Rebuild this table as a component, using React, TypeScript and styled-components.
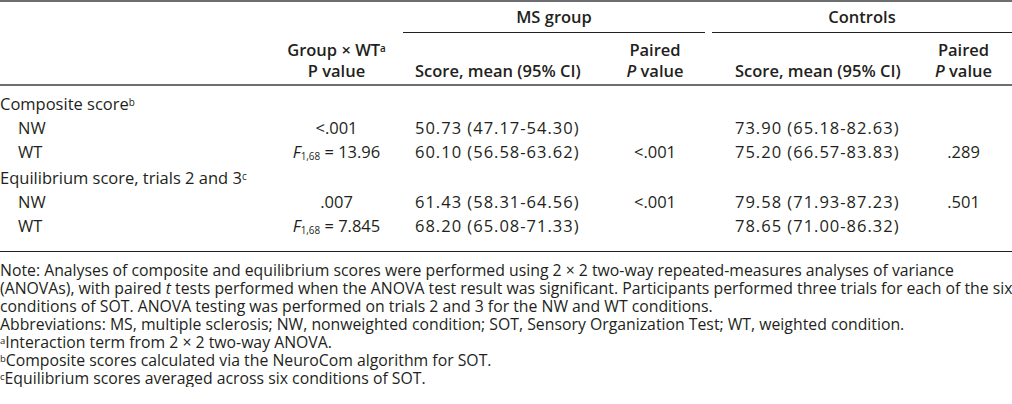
import React from 'react';
import styled, { createGlobalStyle } from 'styled-components';

const GlobalStyle = createGlobalStyle`
  body {
    margin: 0;
    background: #ffffff;
    color: #231f20;
    font-family: "Open Sans", "Liberation Sans", sans-serif;
  }
`;

type Align = 'left' | 'center';

const Wrap = styled.div`
  width: 1012px;
`;

const Rule = styled.div<{ $weight: number; $color: string }>`
  height: ${(p) => p.$weight}px;
  background: ${(p) => p.$color};
`;

const Table = styled.table`
  width: 1012px;
  table-layout: fixed;
  border-collapse: separate;
  border-spacing: 0;
  font-size: 16.5px;
  line-height: 24px;
`;

const SpanCell = styled.th`
  padding: 4px 0 0;
  line-height: 22px;
  font-weight: 600;
  text-align: center;
  vertical-align: top;
`;

const SpanRule = styled.div`
  height: 1px;
  margin-top: 4px;
  background: #231f20;
`;

const HeadCell = styled.th<{ $align: Align; $pad?: number }>`
  padding: 6px 0 3px ${(p) => p.$pad ?? 0}px;
  line-height: 21px;
  font-weight: 600;
  vertical-align: bottom;
  text-align: ${(p) => p.$align};
  white-space: nowrap;
`;

const RuleCell = styled.td`
  padding: 0;
  line-height: 0;
`;

const BodyRow = styled.tr<{ $section: boolean; $first: boolean }>`
  td {
    padding-top: ${(p) => (p.$first ? 6 : p.$section ? 2 : 0)}px;
  }
`;

const SpacerCell = styled.td`
  height: 13px;
  padding: 0;
`;

const Cell = styled.td<{ $align: Align; $pad?: number; $num?: boolean }>`
  padding: 0 0 0 ${(p) => p.$pad ?? 0}px;
  text-align: ${(p) => p.$align};
  letter-spacing: ${(p) => (p.$num ? '1px' : 'normal')};
  white-space: nowrap;
`;

const Sup = styled.sup`
  font-size: 0.6em;
  line-height: 0;
  vertical-align: 0.45em;
`;

const Sub = styled.sub`
  font-size: 0.6em;
  line-height: 0;
  vertical-align: -0.25em;
`;

const Notes = styled.div`
  padding-top: 9px;
  font-size: 15.8px;
  line-height: 18px;
`;

const NoteLine = styled.p`
  margin: 0;
  white-space: nowrap;
`;

interface Row {
  label: React.ReactNode;
  indent?: boolean;
  section?: boolean;
  inter?: React.ReactNode;
  msScore?: string;
  msP?: string;
  ctScore?: string;
  ctP?: string;
}

const F = ({ df, value }: { df: string; value: string }) => (
  <>
    <i>F</i>
    <Sub>{df}</Sub> = {value}
  </>
);

const rows: Row[] = [
  { label: <>Composite score<Sup>b</Sup></>, section: true },
  { label: 'NW', indent: true, inter: '<.001', msScore: '50.73 (47.17-54.30)', ctScore: '73.90 (65.18-82.63)' },
  {
    label: 'WT',
    indent: true,
    inter: <F df="1,68" value="13.96" />,
    msScore: '60.10 (56.58-63.62)',
    msP: '<.001',
    ctScore: '75.20 (66.57-83.83)',
    ctP: '.289',
  },
  { label: <>Equilibrium score, trials 2 and 3<Sup>c</Sup></>, section: true },
  {
    label: 'NW',
    indent: true,
    inter: '.007',
    msScore: '61.43 (58.31-64.56)',
    msP: '<.001',
    ctScore: '79.58 (71.93-87.23)',
    ctP: '.501',
  },
  { label: 'WT', indent: true, inter: <F df="1,68" value="7.845" />, msScore: '68.20 (65.08-71.33)', ctScore: '78.65 (71.00-86.32)' },
];

const RuleRow = ({ weight, color }: { weight: number; color: string }) => (
  <tr>
    <RuleCell colSpan={7}>
      <Rule $weight={weight} $color={color} />
    </RuleCell>
  </tr>
);

export default function App() {
  return (
    <>
      <GlobalStyle />
      <Wrap>
        <Rule $weight={2} $color="#6d6e71" />
        <Table>
          <colgroup>
            <col style={{ width: 270 }} />
            <col style={{ width: 133 }} />
            <col style={{ width: 202 }} />
            <col style={{ width: 100 }} />
            <col style={{ width: 7 }} />
            <col style={{ width: 203 }} />
            <col style={{ width: 97 }} />
          </colgroup>
          <thead>
            <tr>
              <SpanCell />
              <SpanCell />
              <SpanCell colSpan={2}>
                MS group
                <SpanRule />
              </SpanCell>
              <SpanCell />
              <SpanCell colSpan={2}>
                Controls
                <SpanRule />
              </SpanCell>
            </tr>
            <tr>
              <HeadCell $align="left" />
              <HeadCell $align="center">
                Group × WT<Sup>a</Sup>
                <br />P value
              </HeadCell>
              <HeadCell $align="left" $pad={12}>Score, mean (95% CI)</HeadCell>
              <HeadCell $align="center">
                Paired
                <br />
                <i>P</i> value
              </HeadCell>
              <HeadCell $align="left" />
              <HeadCell $align="left" $pad={23}>Score, mean (95% CI)</HeadCell>
              <HeadCell $align="center">
                Paired
                <br />
                <i>P</i> value
              </HeadCell>
            </tr>
            <RuleRow weight={2} color="#6d6e71" />
          </thead>
          <tbody>
            {rows.map((r, i) => (
              <BodyRow key={i} $section={!!r.section} $first={i === 0}>
                <Cell $align="left" $pad={r.indent ? 18 : 0}>{r.label}</Cell>
                <Cell $align="center">{r.inter}</Cell>
                <Cell $align="left" $pad={12} $num>{r.msScore}</Cell>
                <Cell $align="center">{r.msP}</Cell>
                <Cell $align="left" />
                <Cell $align="left" $pad={23} $num>{r.ctScore}</Cell>
                <Cell $align="center">{r.ctP}</Cell>
              </BodyRow>
            ))}
            <tr>
              <SpacerCell colSpan={7} />
            </tr>
            <RuleRow weight={1} color="#231f20" />
          </tbody>
        </Table>
        <Notes>
          <NoteLine>
            Note: Analyses of composite and equilibrium scores were performed using 2 × 2 two-way repeated-measures analyses of variance
            <br />
            (ANOVAs), with paired <i>t</i> tests performed when the ANOVA test result was significant. Participants performed three trials for each of the six
            <br />
            conditions of SOT. ANOVA testing was performed on trials 2 and 3 for the NW and WT conditions.
          </NoteLine>
          <NoteLine>
            Abbreviations: MS, multiple sclerosis; NW, nonweighted condition; SOT, Sensory Organization Test; WT, weighted condition.
          </NoteLine>
          <NoteLine>
            <Sup>a</Sup>Interaction term from 2 × 2 two-way ANOVA.
          </NoteLine>
          <NoteLine>
            <Sup>b</Sup>Composite scores calculated via the NeuroCom algorithm for SOT.
          </NoteLine>
          <NoteLine>
            <Sup>c</Sup>Equilibrium scores averaged across six conditions of SOT.
          </NoteLine>
        </Notes>
      </Wrap>
    </>
  );
}
